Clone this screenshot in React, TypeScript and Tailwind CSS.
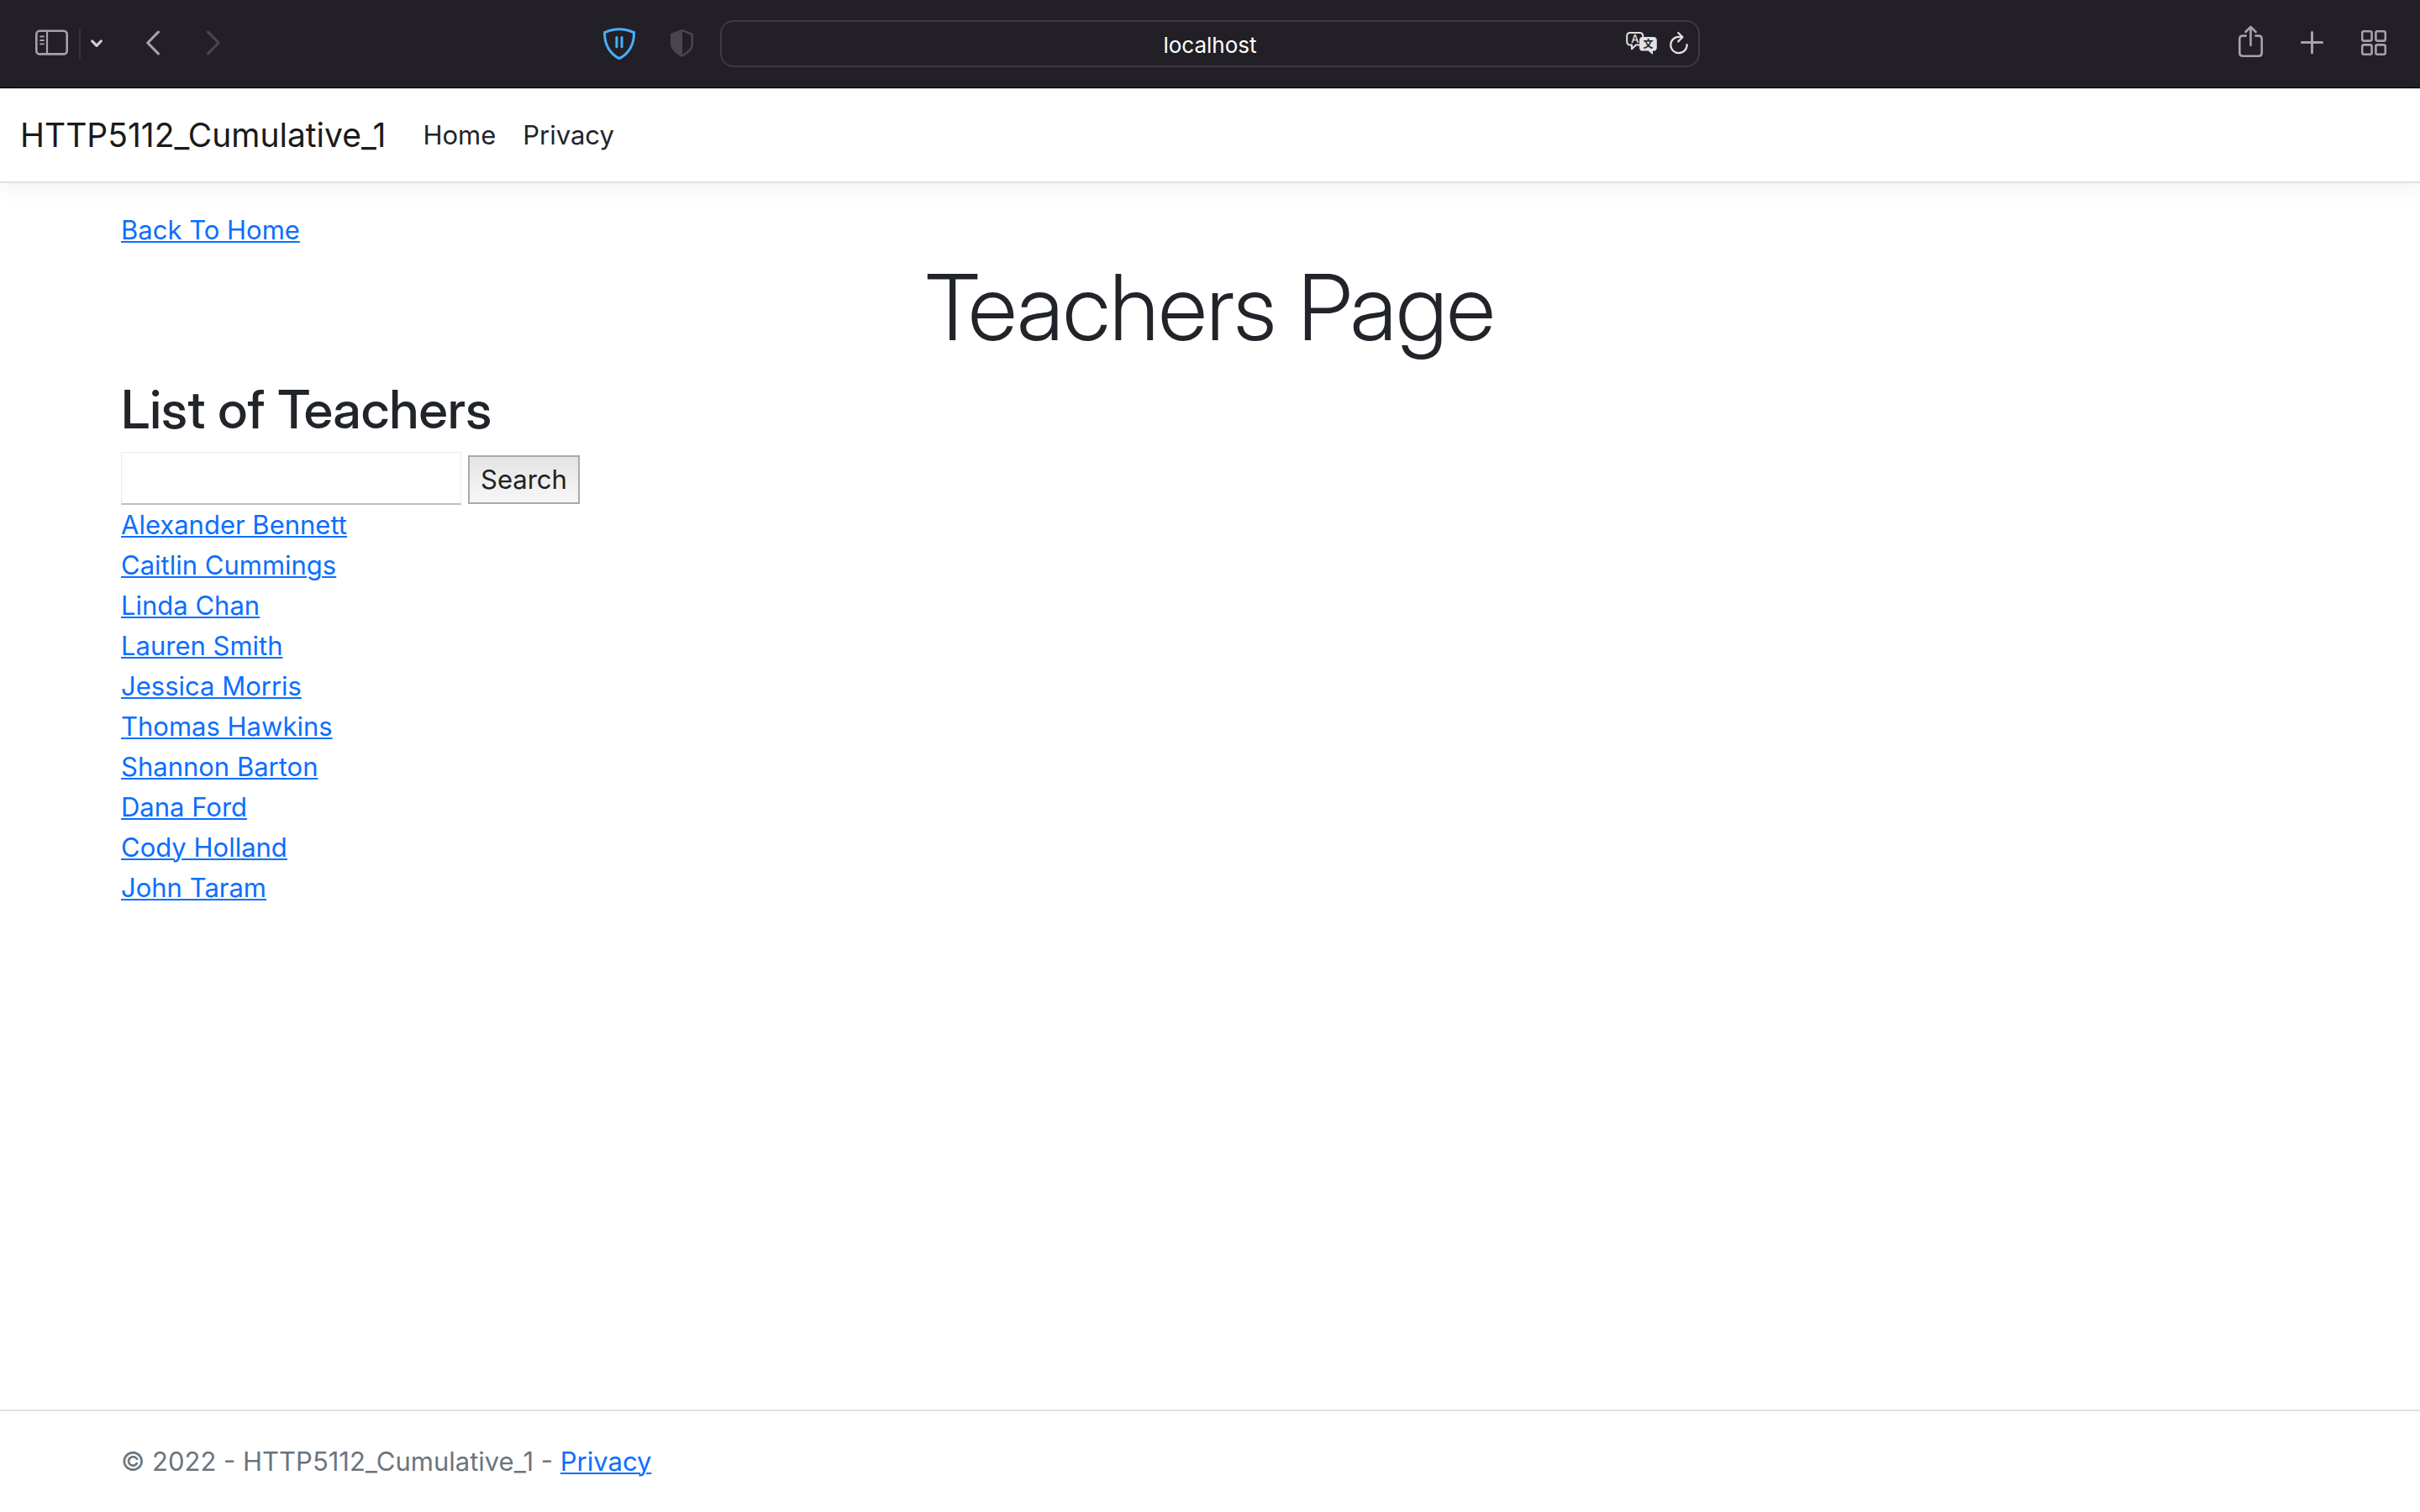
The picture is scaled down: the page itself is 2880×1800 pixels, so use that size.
import type { ReactNode } from "react";

const teachers = [
  "Alexander Bennett",
  "Caitlin Cummings",
  "Linda Chan",
  "Lauren Smith",
  "Jessica Morris",
  "Thomas Hawkins",
  "Shannon Barton",
  "Dana Ford",
  "Cody Holland",
  "John Taram",
];

const linkClass =
  "text-[#0d6efd] underline decoration-2 underline-offset-2 hover:text-[#0a58ca]";

type IconProps = { width: number; children: ReactNode };

// Toolbar icons share one 44px tall canvas so that they line up on its centre.
function Icon({ width, children }: IconProps) {
  return (
    <svg
      width={width}
      height={44}
      viewBox={`0 0 ${width} 44`}
      fill="none"
      stroke="currentColor"
      strokeWidth={2.6}
      strokeLinecap="round"
      strokeLinejoin="round"
      aria-hidden="true"
      className="shrink-0"
    >
      {children}
    </svg>
  );
}

function ToolButton({ label, children }: { label: string; children: ReactNode }) {
  return (
    <button type="button" aria-label={label} className="block shrink-0">
      {children}
    </button>
  );
}

function Toolbar() {
  return (
    <div className="flex h-[105px] items-center gap-8 border-b border-black bg-[#221f26] px-10 text-[#a6a2a9]">
      <div className="flex flex-1 items-center justify-between">
        <div className="flex items-center">
          <ToolButton label="Show sidebar">
            <Icon width={42}>
              <rect x="3.3" y="6.8" width="36.4" height="27.6" rx="4" />
              <path d="M16 7v27" strokeWidth={2.2} />
              <path d="M8 13.5h4M8 18h4M8 22.3h4" strokeWidth={1.8} />
            </Icon>
          </ToolButton>
          <span className="mx-3 h-9 w-0.5 bg-[#353239]" />
          <ToolButton label="Tab groups">
            <span className="block text-[#d3d0d6]">
              <Icon width={14}>
                <path d="M1.8 19l5.2 5.4L12.2 19" strokeWidth={3.2} />
              </Icon>
            </span>
          </ToolButton>
          <div className="ml-[52px] flex items-center gap-14">
            <ToolButton label="Back">
              <Icon width={16}>
                <path d="M14.4 8.2L1.8 21l12.6 12.8" strokeWidth={3.2} />
              </Icon>
            </ToolButton>
            <ToolButton label="Forward">
              <span className="block text-[#49464d]">
                <Icon width={16}>
                  <path d="M1.6 8.2L14.2 21 1.6 33.8" strokeWidth={3.2} />
                </Icon>
              </span>
            </ToolButton>
          </div>
        </div>
        <div className="flex items-center gap-[42px]">
          <ToolButton label="Ad blocker">
            <span className="block text-[#45b0fc]">
              <Icon width={38}>
                <path
                  d="M1.6 8.6C12.6 3.6 25.400 3.6 36.4 8.6C37 23 30 34.2 19 39.6C8 34.2 1 23 1.6 8.6z"
                  strokeWidth={3}
                  strokeLinejoin="miter"
                />
                <path d="M15.9 14.6v11.2M22 14.6v11.2" strokeWidth={3} />
              </Icon>
            </span>
          </ToolButton>
          <ToolButton label="Privacy report">
            <span className="block text-[#49464d]">
              <Icon width={27}>
                <path
                  d="M13.5 6.2L25.8 10.8v12.4c0 5-4 8.8-12.3 13.6C5.2 32 1.2 28.2 1.2 23.2V10.8z"
                  strokeWidth={2.4}
                />
                <path d="M14 6L1 10.6v12.6C1 28 5 32 14 37z" fill="currentColor" stroke="none" />
              </Icon>
            </span>
          </ToolButton>
        </div>
      </div>

      <div className="relative flex h-14 w-[1166px] shrink items-center rounded-[16px] border-2 border-[#3c3940] text-[#e2e0e4]">
        <input
          type="text"
          aria-label="Address"
          defaultValue="localhost"
          className="h-full w-full bg-transparent pt-0.5 text-center text-[26px] text-white outline-none"
        />
        <div className="absolute right-3 flex items-center gap-[15px]">
          <ToolButton label="Translate">
            <Icon width={37}>
              <path
                d="M15.6 23.6H12L7 28.2V23.6H5C2.6 23.6 1.2 22.2 1.2 19.8V12.8C1.2 10.4 2.6 9 5 9H16.4C18.8 9 20.2 10.4 20.2 12.8V14"
                strokeWidth={2}
              />
              <text
                x="10.8"
                y="20.6"
                textAnchor="middle"
                fontSize="13"
                fontWeight="500"
                fill="currentColor"
                stroke="none"
              >
                A
              </text>
              <path
                d="M20 14H32.6Q36.8 14 36.8 18.2V26.4Q36.8 30.6 32.6 30.6H32V35L26.4 30.6H20Q16 30.6 16 26.4V18.2Q16 14 20 14z"
                fill="currentColor"
                stroke="none"
              />
              <text
                x="26.4"
                y="26.6"
                textAnchor="middle"
                fontSize="12"
                fontWeight="700"
                fill="#221f26"
                stroke="none"
                className="font-['Noto_Sans_CJK_SC',sans-serif]"
              >
                文
              </text>
            </Icon>
          </ToolButton>
          <ToolButton label="Reload">
            <Icon width={22}>
              <path d="M20.6 23A9.7 9.7 0 1 1 11 13.8H15" strokeWidth={2.2} />
              <path d="M10.2 9L15.4 14.2L10.2 19.4" strokeWidth={2.2} />
            </Icon>
          </ToolButton>
        </div>
      </div>

      <div className="flex flex-1 items-center justify-end gap-[45px]">
        <ToolButton label="Share">
          <Icon width={29}>
            <path d="M8.6 12.6H5Q1.3 12.6 1.3 16.3V33Q1.3 36.7 5 36.7H24Q27.7 36.7 27.7 33V16.3Q27.7 12.6 24 12.6H20.4" />
            <path d="M14.5 24V2.4M8.4 8L14.5 2L20.6 8" />
          </Icon>
        </ToolButton>
        <ToolButton label="New tab">
          <Icon width={27}>
            <path d="M13.5 8.4v24.4M1.4 20.6h24.2" strokeWidth={3} />
          </Icon>
        </ToolButton>
        <ToolButton label="Tab overview">
          <Icon width={30}>
            <rect x="1.2" y="7.2" width="11.4" height="11.4" rx="2" />
            <rect x="17.4" y="7.2" width="11.4" height="11.4" rx="2" />
            <rect x="1.2" y="23.4" width="11.4" height="11.4" rx="2" />
            <rect x="17.4" y="23.4" width="11.4" height="11.4" rx="2" />
          </Icon>
        </ToolButton>
      </div>
    </div>
  );
}

function SiteHeader() {
  return (
    <header className="mb-8 border-t border-b-2 border-t-[#c8c8c8] border-b-[#dee2e6] bg-white shadow-[0_8px_24px_rgba(0,0,0,0.05)]">
      <nav className="flex h-[110px] items-center px-6">
        <a href="#home" className="text-[39px] leading-[60px] text-[#1a1a1a]">
          HTTP5112_Cumulative_1
        </a>
        <ul className="ml-11 flex gap-8">
          <li>
            <a href="#home">Home</a>
          </li>
          <li>
            <a href="#privacy">Privacy</a>
          </li>
        </ul>
      </nav>
    </header>
  );
}

export default function App() {
  return (
    <div className="flex min-h-screen flex-col bg-white font-['Inter',sans-serif] text-[31px] leading-[48px] text-[#212529]">
      <Toolbar />
      <SiteHeader />

      <main className="px-36">
        <a href="#home" className={linkClass}>
          Back To Home
        </a>
        <h1 className="mb-4 pt-0.5 text-center font-['Inter_Display','Inter',sans-serif] text-[108px] leading-[132px] font-light">
          Teachers Page
        </h1>
        <h2 className="mb-3 font-['Inter_Display','Inter',sans-serif] text-[63px] leading-[78px] font-medium">
          List of Teachers
        </h2>
        <form className="flex items-end gap-2" onSubmit={(e) => e.preventDefault()}>
          <input
            type="text"
            aria-label="Teacher name"
            className="h-[63px] w-[405px] border border-b-2 border-[#ebebeb] border-b-[#bfbfbf] bg-white px-2 outline-none"
          />
          <button
            type="submit"
            className="mb-px h-[58px] border-2 border-[#aaaaaa] bg-linear-to-b from-[#e4e4e4] to-[#f7f7f7] px-[13px] text-[#212121]"
          >
            Search
          </button>
        </form>
        <ul>
          {teachers.map((name) => (
            <li key={name}>
              <a href="#teacher" className={linkClass}>
                {name}
              </a>
            </li>
          ))}
        </ul>
      </main>

      <footer className="mt-auto border-t-2 border-[#dee2e6] px-36 leading-[120px] text-[#6c757d]">
        © 2022 - HTTP5112_Cumulative_1 -{" "}
        <a href="#privacy" className={linkClass}>
          Privacy
        </a>
      </footer>
    </div>
  );
}
